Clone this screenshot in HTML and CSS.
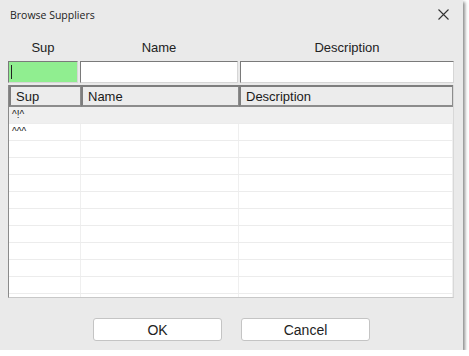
FILE: index.html
```html
<!DOCTYPE html>
<html lang="en-US">
  <head>
    <meta charset="UTF-8" />
    <title>Browse Suppliers</title>
    <link rel="stylesheet" href="styles.css">
  </head>
  <body>
    <div class="dialog">
      <div class="titlebar">
        <span class="title">Browse Suppliers</span>
        <svg class="close" width="11" height="11" viewBox="0 0 11 11">
          <path d="M0.5 0.5 L10.5 10.5 M10.5 0.5 L0.5 10.5" stroke="#333" stroke-width="1.1" fill="none"/>
        </svg>
      </div>

      <div class="filters">
        <span class="label">Sup</span>
        <span class="label">Name</span>
        <span class="label">Description</span>
        <div class="input sup-input"><span class="caret"></span></div>
        <div class="input"></div>
        <div class="input"></div>
      </div>

      <div class="grid">
        <div class="grid-head">
          <div class="head-cell">Sup</div>
          <div class="head-cell">Name</div>
          <div class="head-cell">Description</div>
        </div>
        <div class="grid-body">
          <div class="grid-row selected"><div class="cell">^!^</div><div class="cell"></div><div class="cell"></div></div>
          <div class="grid-row"><div class="cell">^^^</div><div class="cell"></div><div class="cell"></div></div>
          <div class="grid-row"><div class="cell"></div><div class="cell"></div><div class="cell"></div></div>
          <div class="grid-row"><div class="cell"></div><div class="cell"></div><div class="cell"></div></div>
          <div class="grid-row"><div class="cell"></div><div class="cell"></div><div class="cell"></div></div>
          <div class="grid-row"><div class="cell"></div><div class="cell"></div><div class="cell"></div></div>
          <div class="grid-row"><div class="cell"></div><div class="cell"></div><div class="cell"></div></div>
          <div class="grid-row"><div class="cell"></div><div class="cell"></div><div class="cell"></div></div>
          <div class="grid-row"><div class="cell"></div><div class="cell"></div><div class="cell"></div></div>
          <div class="grid-row"><div class="cell"></div><div class="cell"></div><div class="cell"></div></div>
          <div class="grid-row"><div class="cell"></div><div class="cell"></div><div class="cell"></div></div>
          <div class="grid-row last"><div class="cell"></div><div class="cell"></div><div class="cell"></div></div>
        </div>
      </div>

      <div class="buttons">
        <button class="btn">OK</button>
        <button class="btn">Cancel</button>
      </div>
    </div>
  </body>
</html>
```

FILE: styles.css
```css
body {
  margin: 0;
  background-color: #ffffff;
  font-family: "Liberation Sans", Arial, sans-serif;
  color: #1a1a1a;
}

.dialog {
  width: 463px;
  height: 350px;
  box-sizing: border-box;
  background-color: #eaeaea;
  box-shadow: 2px 2px 3px rgba(0,0,0,0.45);
  padding: 0 8px;
}

.titlebar {
  height: 38px;
  display: flex;
  align-items: flex-start;
  justify-content: space-between;
}
.title {
  font-family: "Open Sans", sans-serif;
  font-size: 10.5px;
  margin-top: 8px;
  margin-left: 2px;
  color: #222;
}
.close {
  margin-top: 9px;
  margin-right: 6px;
}

.filters {
  display: grid;
  grid-template-columns: 70px 158px 214px;
  column-gap: 2px;
  row-gap: 4px;
}
.label {
  text-align: center;
  font-size: 13px;
  line-height: 19px;
  color: #222;
}
.input {
  height: 22px;
  box-sizing: border-box;
  background-color: #fff;
  border: 1px solid #d6d6d6;
  border-top-color: #7a7a7a;
  border-left-color: #7a7a7a;
}
.sup-input {
  background-color: #90ee90;
  padding: 3px 2px;
}
.caret {
  display: block;
  width: 1px;
  height: 14px;
  background-color: #222;
}

.grid {
  margin-top: 2px;
  width: 446px;
  height: 213px;
  box-sizing: border-box;
  border-left: 1px solid #8a8a8a;
  border-bottom: 1px solid #c8c8c8;
  border-right: 1px solid #d8d8d8;
  background-color: #fff;
  overflow: hidden;
}
.grid-head, .grid-row {
  display: grid;
  grid-template-columns: 72px 158px 1fr;
}
.head-cell {
  height: 22px;
  box-sizing: border-box;
  background-color: #ececec;
  border: 2px solid #7e7e7e;
  border-right-color: #8c8c8c;
  border-bottom-color: #8c8c8c;
  font-size: 13px;
  line-height: 19px;
  padding-left: 5px;
  margin-right: -1px;
}
.grid-row {
  height: 17px;
  box-sizing: border-box;
  border-bottom: 1px solid #ececec;
}
.grid-row.selected {
  background-color: #efefef;
}
.grid-row.last {
  border-bottom: none;
}
.cell {
  border-right: 1px solid #efefef;
  font-size: 10px;
  line-height: 16px;
  padding-left: 3px;
}

.buttons {
  display: flex;
  justify-content: center;
  gap: 19px;
  margin-top: 20px;
}
.btn {
  width: 129px;
  height: 23px;
  background-color: #fff;
  border: 1px solid #c4c4c4;
  border-radius: 3px;
  font-family: "Liberation Sans", Arial, sans-serif;
  font-size: 14px;
  color: #222;
  padding: 0;
}
```
